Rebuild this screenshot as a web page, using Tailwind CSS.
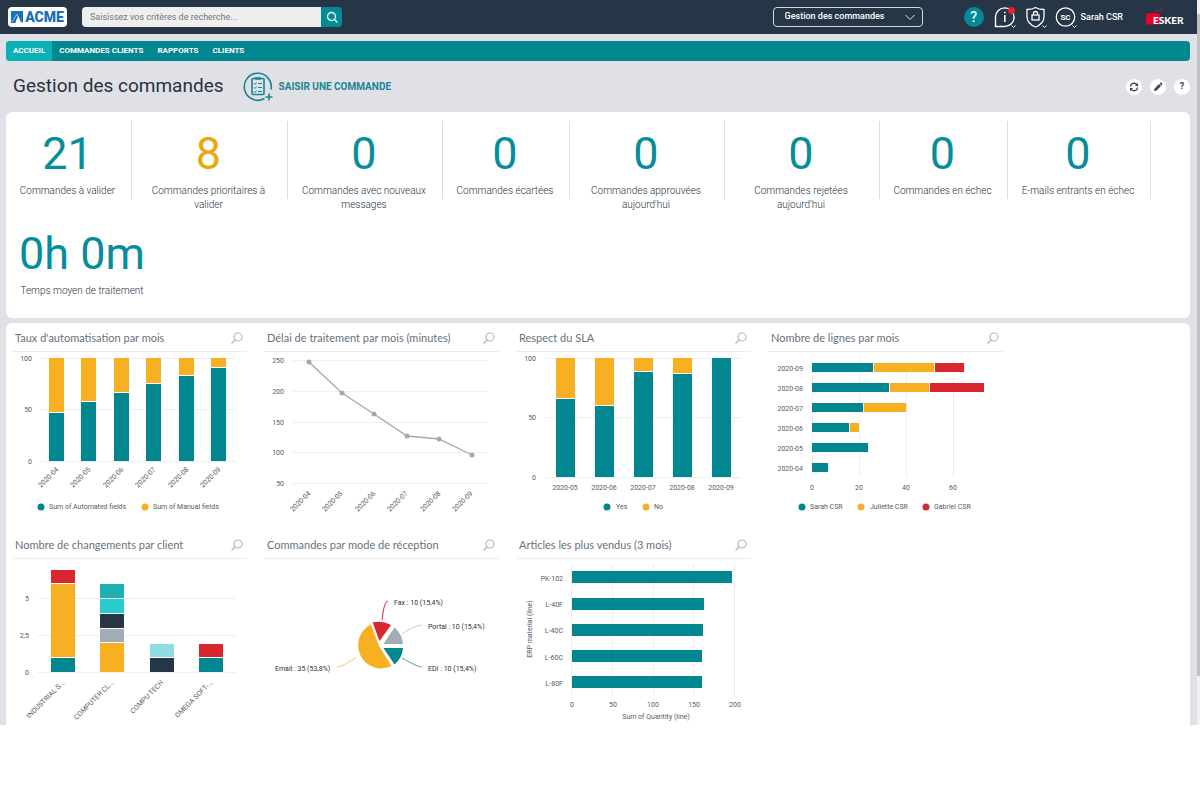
<!DOCTYPE html>
<html lang="fr">
<head>
<meta charset="utf-8">
<meta name="viewport" content="width=device-width, initial-scale=1">
<title>Gestion des commandes</title>
<script src="https://cdn.jsdelivr.net/npm/@tailwindcss/browser@4"></script>
</head>
<body class="bg-white font-[Roboto,sans-serif] text-[#26323f]">
<svg class="hidden" aria-hidden="true">
  <symbol id="lens" viewBox="0 0 12 12"><circle cx="7" cy="5" r="4" fill="none" stroke="#b4b8c0" stroke-width="1.2"/><path d="M4 8L1 11" stroke="#b4b8c0" stroke-width="1.4" stroke-linecap="round"/></symbol>
</svg>
<div class="flex bg-[#e0e1e6]">
<div class="min-w-0 flex-1">
  <header class="flex h-[34px] items-center bg-[#263646] pl-2 text-white">
    <a href="#" aria-label="ACME" class="flex h-5 w-[59px] shrink-0 items-center justify-center gap-[2px] rounded bg-white">
      <svg class="h-3 w-3" viewBox="0 0 12 12"><path d="M0 0h12v12L9.500 10.500 7.500 5 5 9.500 4.500 12H0z" fill="#1573b8"/><path d="M1 11L6 3l1 3" fill="none" stroke="#8cc8ea" stroke-width="1"/></svg>
      <span class="text-[14px] font-black leading-5 text-[#1a6fb5]">ACME</span>
    </a>
    <form class="ml-[15px] flex h-5 w-[260px] shrink-0" onsubmit="return false">
      <input type="search" aria-label="Recherche" placeholder="Saisissez vos critères de recherche..." class="min-w-0 flex-1 rounded-l bg-[#eeeeef] px-2 pt-[2px] text-[9px] text-[#444] placeholder:text-[#777] outline-none">
      <button aria-label="Rechercher" class="flex w-[21px] items-center justify-center rounded-r bg-[#038a94]">
        <svg class="h-3 w-3" viewBox="0 0 12 12" fill="none" stroke="#fff" stroke-width="1.3"><circle cx="5.500" cy="5.500" r="4"/><path d="M8.500 8.500L11 11" stroke-linecap="round"/></svg>
      </button>
    </form>
    <div class="relative ml-auto h-5 w-[150px] shrink-0">
      <select aria-label="Vue" class="block h-5 w-full appearance-none rounded border border-[#cfd6dc] bg-transparent px-[11px] text-[9px] font-medium text-white"><option>Gestion des commandes</option></select>
      <svg class="pointer-events-none absolute right-2 top-[7px] h-[7px] w-[10px]" viewBox="0 0 10 7" fill="none" stroke="#dfe4e8"><path d="M.5 1L5 5.500 9.500 1"/></svg>
    </div>
    <button aria-label="Aide" class="ml-[41px] flex h-5 w-5 shrink-0 items-center justify-center rounded-full bg-[#048a96] text-[14px] font-medium">?</button>
    <button aria-label="Informations" class="ml-[10px] shrink-0"><svg class="h-[24px] w-[22px]" viewBox="0 0 22 24" fill="none" stroke="#fff" stroke-width="1.4"><path d="M1.500 21.500V12a9.300 9.300 0 1 1 9.300 9.500z"/><path d="M10.800 10V17" stroke-width="1.600"/><path d="M10.800 6.800v1.500" stroke-width="1.600"/><circle cx="17.500" cy="5.500" r="3.500" fill="#e8212e" stroke="none"/><path d="M17.500 20.500l2 2 2-2" stroke="#263646" stroke-width="4"/><path d="M17.500 20.500l2 2 2-2" stroke-width="1"/></svg></button>
    <button aria-label="Sécurité" class="ml-[10px] shrink-0"><svg class="h-[24px] w-[22px]" viewBox="0 0 22 24" fill="none" stroke="#fff" stroke-width="1.300"><path d="M9.500 2.500C7 4.200 4 4.500 1 4.500v7c0 5.500 3.500 8.500 8.500 10.500 5-2 8.500-5 8.500-10.500v-7C15 4.500 12 4.200 9.500 2.500z"/><rect x="6" y="10" width="7" height="5"/><path d="M7.500 10V8.500a2 2 0 0 1 4 0V10"/><path d="M16.500 20.500l2 2 2-2" stroke="#263646" stroke-width="4"/><path d="M16.500 20.500l2 2 2-2" stroke-width="1"/></svg></button>
    <button class="ml-[7px] flex shrink-0 items-center gap-1 text-[9px] font-medium">
      <svg class="h-[24px] w-[22px]" viewBox="0 0 22 24" fill="none" stroke="#fff" stroke-width="1.300"><circle cx="10.500" cy="12" r="9.200"/><text x="10.500" y="15" text-anchor="middle" class="text-[8px] font-bold" fill="#fff" stroke="none">SC</text><path d="M17.500 20.500l2 2 2-2" stroke="#263646" stroke-width="4"/><path d="M17.500 20.500l2 2 2-2" stroke-width="1"/></svg>
      <span class="whitespace-nowrap pt-[2px]">Sarah CSR</span>
    </button>
    <a href="#" aria-label="Esker" class="ml-[22px] mr-[12px] shrink-0"><svg class="h-[22px] w-[40px]" viewBox="0 0 40 22"><path d="M1 7.500l8-.5 6 1v10.500H1z" fill="#e4042c"/><path d="M9 4.500l5 1M16.500 1.500l-1.500 4" fill="none" stroke="#b01030" stroke-width="1"/><text x="8" y="18" class="font-[Lato] text-[10px] font-black" fill="#fff">ESKER</text></svg></a>
  </header>

  <main class="pl-[6px] pr-[7px] pt-[7px]">
    <nav class="flex h-5 overflow-hidden rounded bg-[#02868f] text-[8px] font-bold leading-5 text-white">
      <a href="#" aria-current="page" class="bg-[#0bb1b5] px-[7px]">ACCUEIL</a>
      <a href="#" class="px-[7px]">COMMANDES CLIENTS</a>
      <a href="#" class="px-[7px]">RAPPORTS</a>
      <a href="#" class="px-[7px]">CLIENTS</a>
    </nav>

    <div class="flex h-[51px] items-center pl-[7px]">
      <h1 class="text-[19px]">Gestion des commandes</h1>
      <a href="#" class="ml-[19px] flex items-center gap-[6px] text-[10px] font-bold text-[#1a8592]">
        <svg class="h-[30px] w-[30px]" viewBox="0 0 30 30" fill="none" stroke="#1a8592" stroke-width="1.600"><path d="M21.500 26.500A13.500 13.500 0 1 1 28 17.500"/><path d="M26 21.500v7M22.500 25h7"/><rect x="9" y="6.500" width="12" height="16" rx="1"/><path d="M12 6.500h6" stroke-width="2.500"/><path d="M11 11.500l1 1 1.500-2M11 15.500l1 1 1.500-2M11 19.500l1 1 1.500-2M15 11.500h4M15 15.500h4M15 19.500h4" stroke-width="1"/></svg>
        SAISIR UNE COMMANDE
      </a>
      <div class="ml-auto flex gap-2 text-[#3d454e]">
        <button aria-label="Actualiser" class="flex h-4 w-4 items-center justify-center rounded-full bg-white"><svg class="h-[10px] w-[10px]" viewBox="0 0 10 10" fill="none" stroke="currentColor" stroke-width="1.300"><path d="M1.500 4.500A3.500 3.500 0 0 1 8 3M8.500 5.500A3.500 3.500 0 0 1 2 7"/><path d="M9 .8V4H6zM1 9.200V6h3z" fill="currentColor" stroke="none"/></svg></button>
        <button aria-label="Modifier" class="flex h-4 w-4 items-center justify-center rounded-full bg-white"><svg class="h-[10px] w-[10px]" viewBox="0 0 10 10" fill="currentColor"><path d="M1 9l.6-2.600L6 2l2 2-4.400 4.400zM6.600 1.400L7.400.7q.5-.3 1 .1l.8.8q.4.500 0 1l-.7.8z"/></svg></button>
        <button aria-label="Aide" class="flex h-4 w-4 items-center justify-center rounded-full bg-white text-[9px] font-bold">?</button>
      </div>
    </div>

    <section aria-label="Indicateurs" class="flex min-h-[206px] flex-wrap content-start gap-y-[22px] rounded-md bg-white pt-[9px] text-center text-[10px] font-light leading-[14px]">
      <div class="h-[78px] w-[126px] border-r border-[#dcdde2] pr-[2px]"><p class="pt-[3px] text-[45px] font-normal leading-[60px] text-[#048e9c]">21</p><p>Commandes à valider</p></div>
      <div class="h-[78px] w-[156px] border-r border-[#dcdde2] pl-[14px] pr-[16px]"><p class="pt-[3px] text-[45px] font-normal leading-[60px] text-[#e8a90c]">8</p><p>Commandes prioritaires à valider</p></div>
      <div class="h-[78px] w-[155px] border-r border-[#dcdde2] pl-[10px] pr-[12px]"><p class="pt-[3px] text-[45px] font-normal leading-[60px] text-[#048e9c]">0</p><p>Commandes avec nouveaux messages</p></div>
      <div class="h-[78px] w-[127px] border-r border-[#dcdde2] pr-[2px]"><p class="pt-[3px] text-[45px] font-normal leading-[60px] text-[#048e9c]">0</p><p>Commandes écartées</p></div>
      <div class="h-[78px] w-[155px] border-r border-[#dcdde2] pl-[14px] pr-[16px]"><p class="pt-[3px] text-[45px] font-normal leading-[60px] text-[#048e9c]">0</p><p>Commandes approuvées aujourd'hui</p></div>
      <div class="h-[78px] w-[155px] border-r border-[#dcdde2] pl-[14px] pr-[16px]"><p class="pt-[3px] text-[45px] font-normal leading-[60px] text-[#048e9c]">0</p><p>Commandes rejetées aujourd'hui</p></div>
      <div class="h-[78px] w-[128px] border-r border-[#dcdde2] pr-[2px]"><p class="pt-[3px] text-[45px] font-normal leading-[60px] text-[#048e9c]">0</p><p>Commandes en échec</p></div>
      <div class="h-[78px] w-[143px] border-r border-[#dcdde2] pr-[2px]"><p class="pt-[3px] text-[45px] font-normal leading-[60px] text-[#048e9c]">0</p><p>E-mails entrants en échec</p></div>
      <div class="h-[78px] w-[152px]"><p class="pt-[3px] text-[45px] font-normal leading-[60px] text-[#048e9c]">0h 0m</p><p>Temps moyen de traitement</p></div>
    </section>

    <section aria-label="Graphiques" class="mt-[5px] grid grid-cols-[repeat(auto-fill,252px)] rounded-t-md bg-white">

      <article>
        <div class="ml-[6px] mr-[11px] flex h-[29px] items-center justify-between border-b border-[#ebecef] pl-[3px] pr-[4px] pt-[2px]"><h2 class="font-[Lato,sans-serif] text-[11px] text-[#66727d]">Taux d'automatisation par mois</h2><button aria-label="Agrandir"><svg class="h-3 w-3"><use href="#lens"/></svg></button></div>
        <svg class="h-[178px] w-[252px] text-[7px]" viewBox="0 0 252 178" fill="#555b66">
          <path d="M34 6.500H230M34 57.500H230M34 109.500H230" stroke="#eceef1"/>
          <g fill="#f6b022"><path d="M43 6h15v54h-15zM75 6h15v43h-15zM108 6h15v34h-15zM140 6h15v25h-15zM173 6h15v17h-15zM205 6h15v9h-15z"/></g>
          <g fill="#028690"><path d="M43 61h15v48h-15zM75 50h15v59h-15zM108 41h15v68h-15zM140 32h15v77h-15zM173 24h15v85h-15zM205 16h15v93h-15z"/></g>
          <g text-anchor="end"><text x="26" y="9">100</text><text x="26" y="60">50</text><text x="26" y="112">0</text>
          <text transform="translate(53 118) rotate(-45)">2020-04</text><text transform="translate(85 118) rotate(-45)">2020-05</text><text transform="translate(118 118) rotate(-45)">2020-06</text><text transform="translate(150 118) rotate(-45)">2020-07</text><text transform="translate(183 118) rotate(-45)">2020-08</text><text transform="translate(215 118) rotate(-45)">2020-09</text></g>
          <circle cx="35" cy="155" r="3.500" fill="#028690"/><text x="43" y="157">Sum of Automated fields</text>
          <circle cx="139" cy="155" r="3.500" fill="#f6b022"/><text x="147" y="157">Sum of Manual fields</text>
        </svg>
      </article>

      <article>
        <div class="ml-[6px] mr-[11px] flex h-[29px] items-center justify-between border-b border-[#ebecef] pl-[3px] pr-[4px] pt-[2px]"><h2 class="font-[Lato,sans-serif] text-[11px] text-[#66727d]">Délai de traitement par mois (minutes)</h2><button aria-label="Agrandir"><svg class="h-3 w-3"><use href="#lens"/></svg></button></div>
        <svg class="h-[178px] w-[252px] text-[7px]" viewBox="0 0 252 178" fill="#555b66">
          <path d="M35 8.500H230M35 39.500H230M35 70.500H230M35 100.500H230M35 131.500H230" stroke="#eceef1"/>
          <path d="M51 10L84 41L116 62L149 84L181 87L214 103" fill="none" stroke="#a3a9b2" stroke-width="1.300"/>
          <g fill="#a3a9b2"><circle cx="51" cy="10" r="2.500"/><circle cx="84" cy="41" r="2.500"/><circle cx="116" cy="62" r="2.500"/><circle cx="149" cy="84" r="2.500"/><circle cx="181" cy="87" r="2.500"/><circle cx="214" cy="103" r="2.500"/></g>
          <g text-anchor="end"><text x="26" y="11">250</text><text x="26" y="42">200</text><text x="26" y="73">150</text><text x="26" y="103">100</text><text x="26" y="134">50</text>
          <text transform="translate(53 142) rotate(-45)">2020-04</text><text transform="translate(85 142) rotate(-45)">2020-05</text><text transform="translate(118 142) rotate(-45)">2020-06</text><text transform="translate(150 142) rotate(-45)">2020-07</text><text transform="translate(183 142) rotate(-45)">2020-08</text><text transform="translate(215 142) rotate(-45)">2020-09</text></g>
        </svg>
      </article>

      <article>
        <div class="ml-[6px] mr-[11px] flex h-[29px] items-center justify-between border-b border-[#ebecef] pl-[3px] pr-[4px] pt-[2px]"><h2 class="font-[Lato,sans-serif] text-[11px] text-[#66727d]">Respect du SLA</h2><button aria-label="Agrandir"><svg class="h-3 w-3"><use href="#lens"/></svg></button></div>
        <svg class="h-[178px] w-[252px] text-[7px]" viewBox="0 0 252 178" fill="#555b66">
          <path d="M36 6.500H231M36 65.500H231M36 125.500H231" stroke="#eceef1"/>
          <path d="M46 6h19v40h-19zM85 6h19v47h-19zM124 6h19v13h-19zM163 6h19v15h-19z" fill="#f6b022"/>
          <path d="M46 47h19v78h-19zM85 54h19v71h-19zM124 20h19v105h-19zM163 22h19v103h-19zM202 6h19v119h-19z" fill="#028690"/>
          <g text-anchor="end"><text x="26" y="9">100</text><text x="26" y="68">50</text><text x="26" y="128">0</text></g>
          <g text-anchor="middle"><text x="55" y="138">2020-05</text><text x="94" y="138">2020-06</text><text x="133" y="138">2020-07</text><text x="172" y="138">2020-08</text><text x="211" y="138">2020-09</text></g>
          <circle cx="97" cy="155" r="3.500" fill="#028690"/><text x="106" y="157">Yes</text>
          <circle cx="136" cy="155" r="3.500" fill="#f6b022"/><text x="144" y="157">No</text>
        </svg>
      </article>

      <article>
        <div class="ml-[6px] mr-[11px] flex h-[29px] items-center justify-between border-b border-[#ebecef] pl-[3px] pr-[4px] pt-[2px]"><h2 class="font-[Lato,sans-serif] text-[11px] text-[#66727d]">Nombre de lignes par mois</h2><button aria-label="Agrandir"><svg class="h-3 w-3"><use href="#lens"/></svg></button></div>
        <svg class="h-[178px] w-[252px] text-[7px]" viewBox="0 0 252 178" fill="#555b66">
          <path d="M50.500 6V125M97.500 6V125M144.500 6V125M191.500 6V125" stroke="#eceef1"/>
          <path d="M50 11h61v9h-61zM50 31h77v9h-77zM50 51h51v9h-51zM50 71h37v9h-37zM50 91h56v9h-56zM50 111h16v9h-16z" fill="#028690"/>
          <path d="M112 11h60v9h-60zM128 31h39v9h-39zM102 51h42v9h-42zM88 71h9v9h-9z" fill="#f6b022"/>
          <path d="M173 11h29v9h-29zM168 31h54v9h-54z" fill="#d9262f"/>
          <g text-anchor="end"><text x="41" y="19">2020-09</text><text x="41" y="39">2020-08</text><text x="41" y="59">2020-07</text><text x="41" y="79">2020-06</text><text x="41" y="99">2020-05</text><text x="41" y="119">2020-04</text></g>
          <g text-anchor="middle"><text x="50" y="138">0</text><text x="97" y="138">20</text><text x="144" y="138">40</text><text x="191" y="138">60</text></g>
          <circle cx="40" cy="155" r="3.500" fill="#028690"/><text x="48" y="157">Sarah CSR</text>
          <circle cx="99" cy="155" r="3.500" fill="#f6b022"/><text x="108" y="157">Juliette CSR</text>
          <circle cx="164" cy="155" r="3.500" fill="#d9262f"/><text x="172" y="157">Gabriel CSR</text>
        </svg>
      </article>

      <article>
        <div class="ml-[6px] mr-[11px] flex h-[29px] items-center justify-between border-b border-[#ebecef] pl-[3px] pr-[4px] pt-[2px]"><h2 class="font-[Lato,sans-serif] text-[11px] text-[#66727d]">Nombre de changements par client</h2><button aria-label="Agrandir"><svg class="h-3 w-3"><use href="#lens"/></svg></button></div>
        <svg class="h-[166px] w-[252px] text-[7px]" viewBox="0 0 252 166" fill="#555b66">
          <path d="M32 39.500H230M32 76.500H230M32 113.500H230" stroke="#eceef1"/>
          <path d="M45 11h24v13h-24zM193 85h24v13h-24z" fill="#d9262f"/>
          <path d="M45 25h24v73h-24zM94 84h24v29h-24z" fill="#f6b022"/>
          <path d="M45 99h24v14h-24zM193 99h24v14h-24z" fill="#028690"/>
          <path d="M94 70h24v13h-24z" fill="#a3abb6"/>
          <path d="M94 55h24v14h-24zM144 99h24v14h-24z" fill="#263646"/>
          <path d="M94 40h24v14h-24z" fill="#27cbd0"/><path d="M94 25h24v14h-24z" fill="#1fb0b4"/><path d="M144 85h24v13h-24z" fill="#8fdde0"/>
          <g text-anchor="end"><text x="23" y="42">5</text><text x="23" y="79">2,5</text><text x="23" y="116">0</text>
          <text transform="translate(59 124) rotate(-45)">INDUSTRIAL S...</text><text transform="translate(108 124) rotate(-45)">COMPUTER CL...</text><text transform="translate(158 124) rotate(-45)">COMPU TECH</text><text transform="translate(207 124) rotate(-45)">OMEGA SOFT-...</text></g>
        </svg>
      </article>

      <article>
        <div class="ml-[6px] mr-[11px] flex h-[29px] items-center justify-between border-b border-[#ebecef] pl-[3px] pr-[4px] pt-[2px]"><h2 class="font-[Lato,sans-serif] text-[11px] text-[#66727d]">Commandes par mode de réception</h2><button aria-label="Agrandir"><svg class="h-3 w-3"><use href="#lens"/></svg></button></div>
        <svg class="h-[166px] w-[252px] text-[7px]" viewBox="0 0 252 166" fill="#2b3038">
          <path d="M121 87L113 65.500A23 23 0 1 0 133.500 107Z" fill="#f6b022"/>
          <path d="M121.500 82L114.700 63.500A24 24 0 0 1 133 66Z" fill="#d9262f"/>
          <path d="M125.500 85L136.500 68.500A24 24 0 0 1 145 85Z" fill="#a3abb6"/>
          <path d="M125.500 89H145A24 24 0 0 1 136.500 105.500Z" fill="#028690"/>
          <g fill="none"><path d="M124 61C125 54 126 43 130 42" stroke="#d9262f"/><path d="M144 75C150 71 157 67 164 66" stroke="#c3c8cf"/><path d="M144 99C150 102 157 107 164 108" stroke="#45a4ac"/><path d="M98 99C92 102 86 107 79 108" stroke="#f3c566"/></g>
          <text x="136" y="46">Fax : 10 (15,4%)</text><text x="170" y="70">Portal : 10 (15,4%)</text><text x="170" y="112">EDI : 10 (15,4%)</text><text x="17" y="112">Email : 35 (53,8%)</text>
        </svg>
      </article>

      <article>
        <div class="ml-[6px] mr-[11px] flex h-[29px] items-center justify-between border-b border-[#ebecef] pl-[3px] pr-[4px] pt-[2px]"><h2 class="font-[Lato,sans-serif] text-[11px] text-[#66727d]">Articles les plus vendus (3 mois)</h2><button aria-label="Agrandir"><svg class="h-3 w-3"><use href="#lens"/></svg></button></div>
        <svg class="h-[166px] w-[252px] text-[7px]" viewBox="0 0 252 166" fill="#555b66">
          <path d="M61.500 5V137M102.500 5V137M143.500 5V137M183.500 5V137M224.500 5V137" stroke="#eceef1"/>
          <path d="M62 12h160v12h-160zM62 39h132v12h-132zM62 65h131v12h-131zM62 91h130v12h-130zM62 117h130v12h-130z" fill="#028690"/>
          <g text-anchor="end"><text x="53" y="22">PK-102</text><text x="53" y="48">L-40F</text><text x="53" y="74">L-40C</text><text x="53" y="101">L-60C</text><text x="53" y="127">L-80F</text></g>
          <g text-anchor="middle"><text x="62" y="148">0</text><text x="103" y="148">50</text><text x="143" y="148">100</text><text x="184" y="148">150</text><text x="225" y="148">200</text><text x="146" y="160">Sum of Quantity (line)</text><text transform="translate(22 70) rotate(-90)">ERP material (line)</text></g>
        </svg>
      </article>
    </section>
  </main>
</div>
<div class="w-[3px] shrink-0 bg-[#f1f1f2] pb-[49px] pt-[14px]"><div class="h-full bg-[#bfc0c4]"></div></div>
</div>
</body>
</html>
